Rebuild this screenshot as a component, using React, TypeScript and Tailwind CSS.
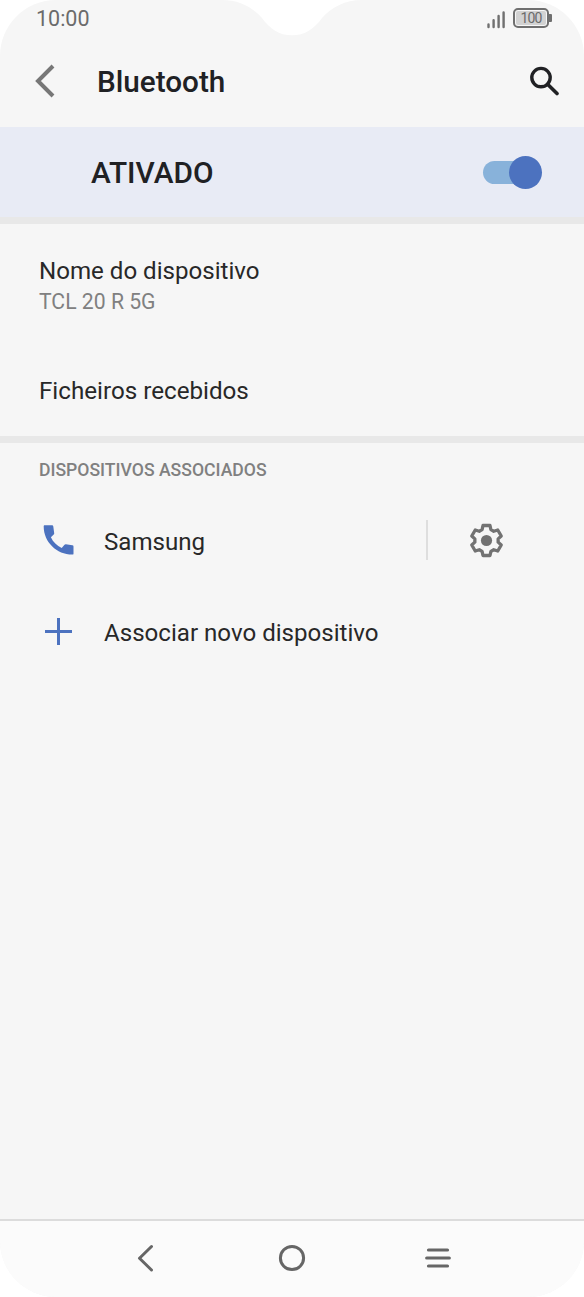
import React, { useState } from 'react';

// Outline of a six-toothed gear centred on 0,0
const GEAR_POINTS = [0, 60, 120, 180, 240, 300]
  .flatMap((deg) => {
    const a = (deg * Math.PI) / 180;
    return [[-4.4, -10.9], [-3.5, -15], [3.5, -15], [4.4, -10.9]].map(
      ([x, y]) =>
        `${(x * Math.cos(a) - y * Math.sin(a)).toFixed(2)},${(x * Math.sin(a) + y * Math.cos(a)).toFixed(2)}`
    );
  })
  .join(' ');

function StatusBar() {
  return (
    <div className="flex h-[36px] items-start justify-between pl-[36px] pr-[32px] text-[#6b6b6b]">
      <span className="mt-[6px] text-[21.5px] leading-[26px]">10:00</span>
      <div className="mt-[8px] flex items-start gap-[7px]">
        <svg className="mt-[2px]" width="20" height="19" viewBox="0 0 20 19" stroke="#707070" strokeWidth="2.4" strokeLinecap="round">
          <path d="M2.5 14.4v2.6M7.6 10.2v6.8M12.6 6v11M17.6 2.4v14.6" />
        </svg>
        <div className="flex items-center">
          <div className="h-[20px] w-[36px] rounded-[5px] border-2 border-[#6f6f6f] p-px">
            <div className="flex h-full items-center justify-center rounded-[2px] bg-[#d2d2d2] text-[14px] leading-none tracking-[-0.8px]">
              100
            </div>
          </div>
          <div className="h-[8px] w-[3px] rounded-r-[1px] bg-[#6f6f6f]" />
        </div>
      </div>
    </div>
  );
}

// White camera cutout that hangs over the status bar
function Notch() {
  return (
    <svg className="absolute left-1/2 top-0 -translate-x-1/2" width="144" height="36" viewBox="0 0 144 36">
      <path d="M2 0C19 0 32 7 42 18C50 29 59 35.3 72 35.3S94 29 102 18C112 7 125 0 142 0Z" fill="#fff" />
    </svg>
  );
}

function AppBar() {
  return (
    <header className="flex h-[91px] items-center pl-[35px] pr-[25px]">
      <svg className="-mt-[2px]" width="20" height="34" viewBox="0 0 20 34" fill="none" stroke="#777" strokeWidth="4">
        <path d="M18 2L3 17l15 15" />
      </svg>
      <h1 className="ml-[42px] mt-[2px] flex-1 text-[29.7px] font-medium text-[#202124]">Bluetooth</h1>
      <svg className="-mt-[2px]" width="30" height="30" viewBox="0 0 30 30" fill="none" stroke="#202124" strokeWidth="3.4">
        <circle cx="12" cy="11.6" r="9.2" />
        <path d="M18.6 18.2L28 27.6" strokeWidth="3.6" strokeLinecap="round" />
      </svg>
    </header>
  );
}

interface ToggleProps {
  checked: boolean;
  onChange: (checked: boolean) => void;
}

function Toggle({ checked, onChange }: ToggleProps) {
  return (
    <button
      role="switch"
      aria-checked={checked}
      aria-label="Bluetooth"
      onClick={() => onChange(!checked)}
      className="flex h-[33px] w-[59px] items-center"
    >
      <span className={`h-[23px] w-[42px] rounded-full ${checked ? 'bg-[#88b2da]' : 'bg-gray-300'}`} />
      <span
        className={`size-[33px] rounded-full ${
          checked ? '-ml-[16px] bg-[#4c72bf]' : '-ml-[42px] bg-gray-100'
        }`}
      />
    </button>
  );
}

function Divider() {
  return <div className="h-[7px] bg-[#e8e8e8]" />;
}

function PairedDevices() {
  return (
    <section className="pl-[39px]">
      <h2 className="pt-[15px] text-[17.6px] font-medium leading-[24px] text-[#808080]">DISPOSITIVOS ASSOCIADOS</h2>

      <div className="mt-[12px] flex h-[92px] items-center">
        <svg className="ml-[4px]" width="31" height="30" viewBox="-0.7 0 31 30" fill="#4c72bf">
          <path d="M1 .3h7.4c.7 0 1.1.4 1.2 1.1l.9 6.8c.1.6-.1 1-.5 1.4L7.2 12.2c2.2 4.8 6 8.6 10.8 10.8l2.8-3.2c.4-.4.9-.6 1.4-.5l6.4.9c.8.1 1.2.5 1.2 1.2v7c0 .8-.4 1.2-1.2 1.2C13 29.6 0 17 0 1.5 0 .7.3.3 1 .3z" />
        </svg>
        <span className="ml-[30px] mt-[4px] w-[322px] text-[24.1px]">Samsung</span>
        <div className="h-[40px] w-[2px] bg-[#dedede]" />
        <button aria-label="Definições" className="ml-[41px]">
          <svg width="36" height="36" viewBox="-17.5 -18.5 36 36">
            <polygon points={GEAR_POINTS} fill="none" stroke="#727272" strokeWidth="3.3" strokeLinejoin="round" />
            <circle r="5.6" fill="#727272" />
          </svg>
        </button>
      </div>

      <div className="flex h-[91px] items-center">
        <svg className="ml-[6px]" width="27" height="27" viewBox="0 0 27 27" stroke="#4c72bf" strokeWidth="3">
          <path d="M13.5 0v27M0 13.5h27" />
        </svg>
        <span className="ml-[32px] mt-[4px] text-[24.1px]">Associar novo dispositivo</span>
      </div>
    </section>
  );
}

function NavBar() {
  return (
    <nav className="flex h-[78px] items-center justify-between border-t-2 border-[#dcdcdc] bg-[#fbfbfb] pb-[2px] pl-[132px] pr-[132px]">
      <svg width="28" height="28" viewBox="0 0 28 28" fill="none" stroke="#666" strokeWidth="3" strokeLinecap="round" strokeLinejoin="round">
        <path d="M19.5 2.5L7.5 14.2l12 11.8" />
      </svg>
      <svg width="28" height="28" viewBox="0 0 28 28" fill="none" stroke="#666" strokeWidth="3">
        <circle cx="14" cy="14" r="11.6" />
      </svg>
      <svg width="28" height="28" viewBox="0 0 28 28" fill="none" stroke="#666" strokeWidth="3.2" strokeLinecap="round">
        <path d="M4.5 6h19M2.7 14h22.6M4.5 22h19" />
      </svg>
    </nav>
  );
}

function App() {
  const [enabled, setEnabled] = useState(true);

  return (
    <div className="h-[1297px] w-[584px] bg-white">
      <div className="relative flex h-full flex-col overflow-hidden rounded-[56px] bg-[#f6f6f6] font-[Roboto,sans-serif] text-[#282828]">
        <StatusBar />
        <Notch />
        <AppBar />

        <div className="flex h-[90px] items-center justify-between bg-[#e8ebf5] pl-[91px] pr-[42px]">
          <span className="mt-[2px] text-[29.8px] font-medium text-[#202124]">
            {enabled ? 'ATIVADO' : 'DESATIVADO'}
          </span>
          <Toggle checked={enabled} onChange={setEnabled} />
        </div>
        <Divider />

        <section className="h-[212px] pl-[39px]">
          <div className="pt-[31px]">
            <p className="text-[24.1px] leading-[32px]">Nome do dispositivo</p>
            <p className="text-[21.2px] leading-[30px] text-[#808080]">TCL 20 R 5G</p>
          </div>
          <p className="mt-[58px] text-[24.2px] leading-[32px]">Ficheiros recebidos</p>
        </section>
        <Divider />

        <main className="flex-1">
          <PairedDevices />
        </main>
        <NavBar />
      </div>
    </div>
  );
}

export default App;
